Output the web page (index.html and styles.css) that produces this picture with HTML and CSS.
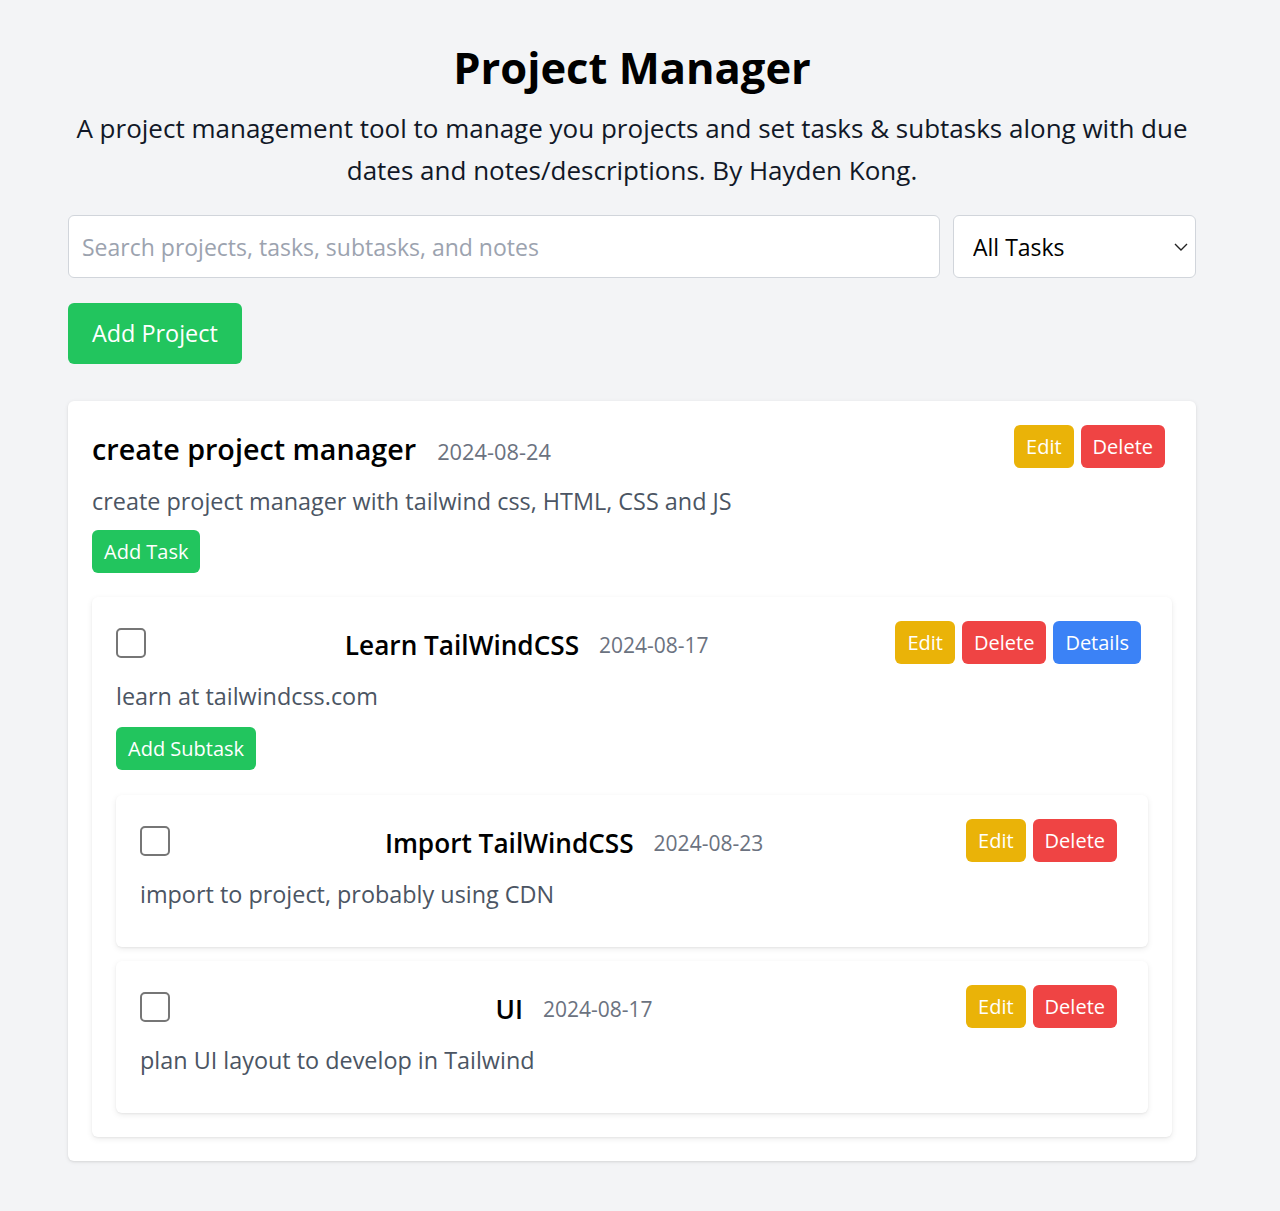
FILE: index.html
```html
<!DOCTYPE html>
<html lang="en">
<head>
<meta charset="utf-8">
<title>Project Manager</title>
<link rel="stylesheet" href="styles.css">
</head>
<body>
<div class="container">
  <h1 class="page-title">Project Manager</h1>
  <p class="subtitle">A project management tool to manage you projects and set tasks &amp; subtasks along with due dates and notes/descriptions. By Hayden Kong.</p>

  <div class="controls">
    <input class="search" type="text" placeholder="Search projects, tasks, subtasks, and notes">
    <div class="select-wrap">
      <select class="select"><option>All Tasks</option></select>
      <svg class="chevron" width="14" height="8" viewBox="0 0 14 8"><path d="M1 1l6 6 6-6" fill="none" stroke="#222" stroke-width="1.4"/></svg>
    </div>
  </div>

  <button class="btn btn-green btn-lg">Add Project</button>

  <div class="project-card">
    <div class="row">
      <div class="title-group">
        <h2 class="project-title">create project manager</h2>
        <span class="date project-date">2024-08-24</span>
      </div>
      <div class="actions">
        <button class="btn btn-sm btn-yellow">Edit</button>
        <button class="btn btn-sm btn-red">Delete</button>
      </div>
    </div>
    <p class="desc project-desc">create project manager with tailwind css, HTML, CSS and JS</p>
    <button class="btn btn-sm btn-green add-task">Add Task</button>

    <div class="task-card">
      <div class="row">
        <span class="checkbox"></span>
        <div class="center-group">
          <span class="item-title">Learn TailWindCSS</span>
          <span class="date">2024-08-17</span>
        </div>
        <div class="actions">
          <button class="btn btn-sm btn-yellow">Edit</button>
          <button class="btn btn-sm btn-red">Delete</button>
          <button class="btn btn-sm btn-blue">Details</button>
        </div>
      </div>
      <p class="desc item-desc">learn at tailwindcss.com</p>
      <button class="btn btn-sm btn-green add-subtask">Add Subtask</button>

      <div class="subtasks">
        <div class="subtask-card">
          <div class="row">
            <span class="checkbox"></span>
            <div class="center-group">
              <span class="item-title">Import TailWindCSS</span>
              <span class="date">2024-08-23</span>
            </div>
            <div class="actions">
              <button class="btn btn-sm btn-yellow">Edit</button>
              <button class="btn btn-sm btn-red">Delete</button>
            </div>
          </div>
          <p class="desc item-desc sub-desc">import to project, probably using CDN</p>
        </div>
        <div class="subtask-card">
          <div class="row">
            <span class="checkbox"></span>
            <div class="center-group">
              <span class="item-title">UI</span>
              <span class="date">2024-08-17</span>
            </div>
            <div class="actions">
              <button class="btn btn-sm btn-yellow">Edit</button>
              <button class="btn btn-sm btn-red">Delete</button>
            </div>
          </div>
          <p class="desc item-desc sub-desc">plan UI layout to develop in Tailwind</p>
        </div>
      </div>
    </div>
  </div>
</div>
</body>
</html>
```

FILE: styles.css
```css
* { box-sizing: border-box; }
html, body { margin: 0; padding: 0; }
body {
  background: #f3f4f6;
  font-family: "Open Sans", "Noto Sans", sans-serif;
  color: #111827;
}
.container {
  width: 1128px;
  margin-left: 68px;
  padding-top: 41px;
  padding-bottom: 50px;
}
.page-title {
  margin: 0 0 12px;
  font-size: 43.5px;
  line-height: 54px;
  font-weight: 700;
  text-align: center;
  color: #000;
}
.subtitle {
  margin: 0 0 24px;
  font-size: 26px;
  line-height: 42px;
  text-align: center;
  color: #111827;
}
.controls {
  display: flex;
  gap: 13px;
  margin-bottom: 25px;
}
.search {
  flex: 1;
  height: 63px;
  border: 1px solid #d1d5db;
  border-radius: 6px;
  padding: 0 13px;
  font-family: inherit;
  font-size: 23px;
  color: #111827;
  background: #fff;
  outline: none;
}
.search::placeholder { color: #9ca3af; }
.select-wrap {
  position: relative;
  width: 243px;
}
.select {
  width: 100%;
  height: 63px;
  appearance: none;
  -webkit-appearance: none;
  border: 1px solid #d1d5db;
  border-radius: 6px;
  padding: 0 19px;
  font-family: inherit;
  font-size: 23px;
  color: #000;
  background: #fff;
}
.chevron {
  position: absolute;
  right: 8px;
  top: 28px;
}
.btn {
  border: none;
  color: #fff;
  font-family: inherit;
  border-radius: 6px;
  cursor: pointer;
  display: inline-block;
}
.btn-lg {
  font-size: 23.4px;
  line-height: 37px;
  padding: 12px 24px;
  margin-bottom: 37px;
}
.btn-sm {
  font-size: 20px;
  line-height: 31px;
  padding: 6px 12px;
}
.btn-green { background: #22c55e; }
.btn-yellow { background: #eab308; }
.btn-red { background: #ef4444; }
.btn-blue { background: #3b82f6; }

.project-card {
  background: #fff;
  border-radius: 6px;
  padding: 24px;
  box-shadow: 0 1px 4px rgba(0,0,0,0.09), 0 1px 2px rgba(0,0,0,0.05);
}
.row {
  display: flex;
  align-items: center;
  justify-content: space-between;
  height: 43px;
}
.title-group {
  display: flex;
  align-items: center;
}
.project-title {
  margin: 0;
  font-size: 28.7px;
  line-height: 42px;
  font-weight: 600;
  color: #000;
  position: relative;
  top: 2px;
}
.date {
  margin-left: 20px;
  font-size: 21px;
  font-weight: 500;
  color: #6b7280;
  position: relative;
  top: 2px;
}
.project-date {
  font-size: 21.8px;
  margin-left: 21px;
  top: 5px;
}
.actions {
  display: flex;
  gap: 7px;
  margin-right: 7px;
}
.desc {
  margin: 0;
  font-size: 23.4px;
  line-height: 36px;
  color: #4b5563;
}
.project-desc { margin-top: 15px; }
.add-task { margin-top: 11px; }

.task-card, .subtask-card {
  background: #fff;
  border-radius: 6px;
  padding: 24px;
  box-shadow: 0 2px 6px rgba(0,0,0,0.08), 0 1px 2px rgba(0,0,0,0.05);
}
.task-card { margin-top: 24px; }
.checkbox {
  flex: none;
  width: 30px;
  height: 30px;
  border: 2px solid #767676;
  border-radius: 5px;
  background: #fff;
}
.center-group {
  flex: 1;
  margin-left: 12px;
  display: flex;
  justify-content: center;
  align-items: center;
}
.item-title {
  font-size: 26.2px;
  font-weight: 600;
  color: #000;
  position: relative;
  top: 2px;
}
.item-desc { margin-top: 14px; }
.add-subtask { margin-top: 13px; }
.subtasks { margin-top: 25px; }
.subtask-card + .subtask-card { margin-top: 14px; }
.sub-desc { margin-bottom: 11px; }
```
